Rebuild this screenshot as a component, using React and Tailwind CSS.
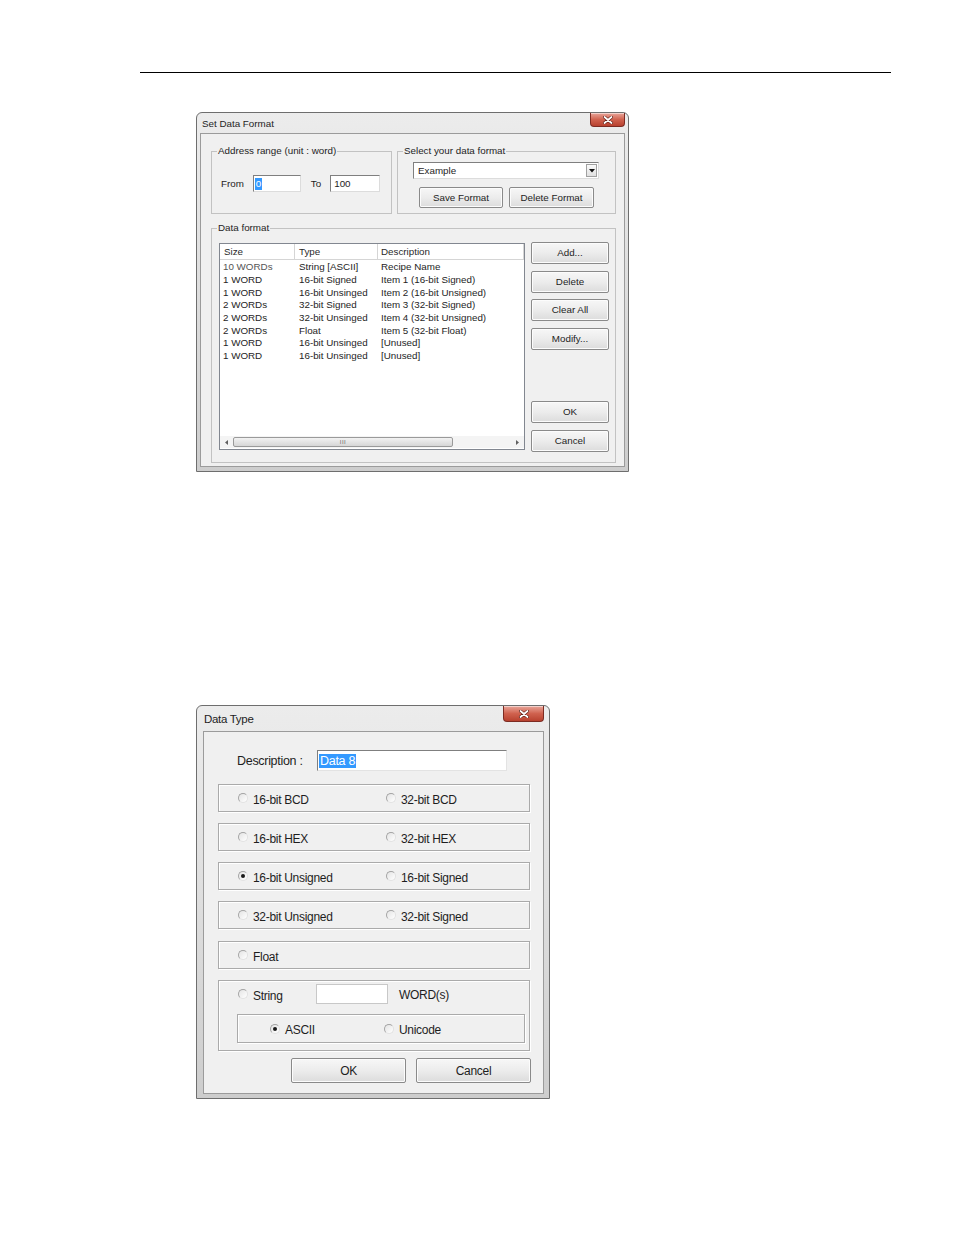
import React from 'react';

const rows = [
  ['10 WORDs', 'String [ASCII]', 'Recipe Name'],
  ['1 WORD', '16-bit Signed', 'Item 1 (16-bit Signed)'],
  ['1 WORD', '16-bit Unsinged', 'Item 2 (16-bit Unsigned)'],
  ['2 WORDs', '32-bit Signed', 'Item 3 (32-bit Signed)'],
  ['2 WORDs', '32-bit Unsinged', 'Item 4 (32-bit Unsigned)'],
  ['2 WORDs', 'Float', 'Item 5 (32-bit Float)'],
  ['1 WORD', '16-bit Unsinged', '[Unused]'],
  ['1 WORD', '16-bit Unsinged', '[Unused]'],
];

const CloseButton = ({ className }) => (
  <div
    className={`${className} self-start flex items-center justify-center rounded-b-[4px] border border-t-0 border-[#7d2b22] bg-gradient-to-b from-[#e8a69b] via-[#d0624f] to-[#b8412f] shadow-[inset_0_1px_0_rgba(255,255,255,0.5)]`}
  >
    <svg width="10" height="8" viewBox="0 0 10 8">
      <path d="M1.5 1 L8.5 7 M8.5 1 L1.5 7" stroke="#5a1a12" strokeWidth="3" strokeLinecap="round" />
      <path d="M1.5 1 L8.5 7 M8.5 1 L1.5 7" stroke="#ffffff" strokeWidth="1.8" strokeLinecap="round" />
    </svg>
  </div>
);

const WinButton = ({ children, className }) => (
  <div
    className={`${className} flex items-center justify-center rounded-[2px] border border-[#8a8a8a] bg-gradient-to-b from-[#f7f7f7] via-[#ececec] to-[#dcdcdc] shadow-[inset_0_0_0_1px_#fcfcfc] text-[#1e1e1e]`}
  >
    {children}
  </div>
);

const Radio = ({ checked }) => (
  <div className="w-[10px] h-[10px] shrink-0 rounded-full border border-[#a4a4a4] border-b-[#e2e2e2] border-r-[#e2e2e2] bg-gradient-to-br from-[#e4e4e4] to-white flex items-center justify-center">
    {checked && <div className="w-[4px] h-[4px] rounded-full bg-[#1a1a1a]" />}
  </div>
);

const Option = ({ label, checked }) => (
  <div className="flex items-center gap-[5px]">
    <Radio checked={checked} />
    <span className="pt-[3px]">{label}</span>
  </div>
);

const Group = ({ children, className }) => (
  <div
    className={`${className} border border-[#aaaaaa] shadow-[inset_1px_1px_0_#ffffff,1px_1px_0_#ffffff]`}
  >
    {children}
  </div>
);

const SetDataFormat = () => (
  <div className="w-[433px] h-[360px] rounded-t-[6px] border border-[#6e6e6e] bg-gradient-to-b from-[#ececec] via-[#dedede] to-[#cdcdcd] flex flex-col px-[3px] pb-[4px] text-[9.8px] leading-[12px] text-[#1e1e1e] font-['Liberation_Sans',Arial,sans-serif]">
    <div className="h-[20px] flex justify-between pl-[2px]">
      <span className="self-center pt-[1px]">Set Data Format</span>
      <CloseButton className="w-[35px] h-[14px]" />
    </div>
    <div className="flex-1 border border-[#9b9b9b] bg-[#f0f0f0] pl-[10px] pt-[11px]">
      <div className="flex gap-[5px]">
        <fieldset className="w-[181px] h-[69px] border border-[#c2c2c2]">
          <legend className="ml-[5px] px-[1px]">Address range (unit : word)</legend>
          <div className="flex items-center mt-[18px] pl-[9px]">
            <span>From</span>
            <div className="ml-[9px] w-[48px] h-[17px] bg-white border border-[#7f7f7f] border-b-[#dcdcdc] border-r-[#dcdcdc] flex items-center pl-[1px]">
              <span className="bg-[#3399ff] text-white px-[1px]">0</span>
            </div>
            <span className="ml-[10px]">To</span>
            <div className="ml-[9px] w-[50px] h-[17px] bg-white border border-[#7f7f7f] border-b-[#dcdcdc] border-r-[#dcdcdc] flex items-center pl-[3px]">
              100
            </div>
          </div>
        </fieldset>
        <fieldset className="w-[219px] h-[69px] border border-[#c2c2c2]">
          <legend className="ml-[5px] px-[1px]">Select your data format</legend>
          <div className="ml-[15px] mt-[5px] w-[186px] h-[17px] bg-white border border-[#7f7f7f] border-b-[#dcdcdc] border-r-[#dcdcdc] flex items-center justify-between pl-[4px] pr-[1px]">
            <span>Example</span>
            <div className="w-[11px] h-[13px] border border-[#a0a0a0] bg-gradient-to-b from-[#fafafa] to-[#e0e0e0] flex items-center justify-center">
              <svg width="6" height="4" viewBox="0 0 6 4">
                <path d="M0 0 H6 L3 3.5 Z" fill="#111" />
              </svg>
            </div>
          </div>
          <div className="flex gap-[6px] ml-[21px] mt-[8px]">
            <WinButton className="w-[84px] h-[21px]">Save Format</WinButton>
            <WinButton className="w-[85px] h-[21px]">Delete Format</WinButton>
          </div>
        </fieldset>
      </div>
      <fieldset className="mt-[8px] w-[405px] h-[241px] border border-[#c2c2c2]">
        <legend className="ml-[5px] px-[1px]">Data format</legend>
        <div className="flex gap-[6px] pl-[7px] mt-[8px]">
          <div className="mt-[1px] w-[306px] h-[207px] border border-[#828790] bg-white flex flex-col">
            <div className="h-[16px] flex border-b border-[#d5d5d5] text-[#2a2a2a]">
              <div className="w-[75px] pl-[4px] border-r border-[#d5d5d5] flex items-center">Size</div>
              <div className="w-[83px] pl-[4px] border-r border-[#d5d5d5] flex items-center">Type</div>
              <div className="w-[146px] pl-[3px] border-r border-[#d5d5d5] flex items-center">Description</div>
            </div>
            <div className="pt-[1px] flex-1">
              {rows.map((r, i) => (
                <div key={i} className="flex h-[12.7px] items-center">
                  <div className={`w-[75px] pl-[3px] ${i === 0 ? 'text-[#555555]' : ''}`}>{r[0]}</div>
                  <div className="w-[83px] pl-[4px]">{r[1]}</div>
                  <div className="w-[146px] pl-[3px]">{r[2]}</div>
                </div>
              ))}
            </div>
            <div className="h-[12px] mb-[1px] flex items-center bg-[#f4f4f4]">
              <div className="w-[13px] flex justify-center">
                <svg width="3" height="5" viewBox="0 0 3 5">
                  <path d="M3 0 V5 L0 2.5 Z" fill="#606060" />
                </svg>
              </div>
              <div className="w-[220px] h-[10px] rounded-[2px] border border-[#9a9a9a] bg-gradient-to-b from-[#f2f2f2] to-[#d6d6d6] flex items-center justify-center">
                <span className="text-[6px] leading-[6px] text-[#6a6a6a] tracking-[0.5px]">III</span>
              </div>
              <div className="flex-1" />
              <div className="w-[14px] flex justify-center">
                <svg width="3" height="5" viewBox="0 0 3 5">
                  <path d="M0 0 V5 L3 2.5 Z" fill="#606060" />
                </svg>
              </div>
            </div>
          </div>
          <div className="flex flex-col w-[78px]">
            <WinButton className="h-[22px]">Add...</WinButton>
            <WinButton className="h-[22px] mt-[7px]">Delete</WinButton>
            <WinButton className="h-[22px] mt-[6px]">Clear All</WinButton>
            <WinButton className="h-[22px] mt-[7px]">Modify...</WinButton>
            <WinButton className="h-[22px] mt-[51px]">OK</WinButton>
            <WinButton className="h-[22px] mt-[7px]">Cancel</WinButton>
          </div>
        </div>
      </fieldset>
    </div>
  </div>
);

const DataType = () => (
  <div className="w-[354px] h-[394px] rounded-t-[6px] border border-[#6e6e6e] bg-gradient-to-b from-[#ececec] via-[#dedede] to-[#cdcdcd] flex flex-col pl-[6px] pr-[5px] pb-[4px] text-[12px] leading-[14px] text-[#1e1e1e] tracking-[-0.3px] font-['Liberation_Sans',Arial,sans-serif]">
    <div className="h-[25px] flex justify-between pl-[1px]">
      <span className="self-center text-[11.5px] pt-[1px]">Data Type</span>
      <CloseButton className="w-[41px] h-[16px]" />
    </div>
    <div className="flex-1 border border-[#9b9b9b] bg-[#f0f0f0]">
      <div className="flex items-center mt-[18px] pl-[33px]">
        <span className="w-[80px] text-[12.5px]">Description :</span>
        <div className="w-[190px] h-[21px] bg-white border border-[#7f7f7f] border-b-[#e3e3e3] border-r-[#e3e3e3] flex items-center pl-[1px]">
          <span className="bg-[#3399ff] text-white px-[1px] text-[12.5px]">Data 8</span>
        </div>
      </div>
      <div className="pl-[14px] mt-[13px] flex flex-col gap-[11px]">
        {[
          ['16-bit BCD', '32-bit BCD', false],
          ['16-bit HEX', '32-bit HEX', false],
          ['16-bit Unsigned', '16-bit Signed', true],
          ['32-bit Unsigned', '32-bit Signed', false],
        ].map(([a, b, c], i) => (
          <Group key={i} className={`w-[312px] h-[28px] flex items-center pl-[19px] ${i === 3 ? 'mb-[1px]' : ''}`}>
            <div className="w-[148px]">
              <Option label={a} checked={c} />
            </div>
            <Option label={b} />
          </Group>
        ))}
        <Group className="w-[312px] h-[28px] flex items-center pl-[19px]">
          <Option label="Float" />
        </Group>
        <Group className="w-[312px] h-[71px] pt-[3px]">
          <div className="flex items-center pl-[19px]">
            <div className="w-[78px]">
              <Option label="String" />
            </div>
            <div className="w-[72px] h-[20px] bg-white border border-[#c8c8c8]" />
            <span className="ml-[11px] pt-[2px]">WORD(s)</span>
          </div>
          <Group className="ml-[18px] mt-[10px] w-[288px] h-[29px] flex items-center pl-[32px]">
            <div className="w-[114px]">
              <Option label="ASCII" checked />
            </div>
            <Option label="Unicode" />
          </Group>
        </Group>
      </div>
      <div className="flex gap-[10px] pl-[87px] mt-[7px]">
        <WinButton className="w-[115px] h-[25px]">OK</WinButton>
        <WinButton className="w-[115px] h-[25px]">Cancel</WinButton>
      </div>
    </div>
  </div>
);

export default function App() {
  return (
    <div className="w-[954px] h-[1235px] bg-white">
      <div className="pt-[72px] pl-[140px]">
        <div className="w-[751px] h-px bg-black" />
      </div>
      <div className="ml-[196px] mt-[39px]">
        <SetDataFormat />
      </div>
      <div className="ml-[196px] mt-[233px]">
        <DataType />
      </div>
    </div>
  );
}
